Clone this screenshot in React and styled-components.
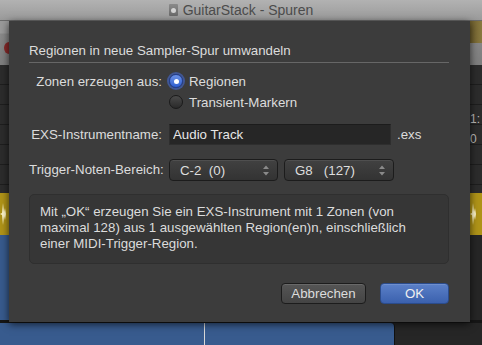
import React, { useState } from 'react';
import styled, { createGlobalStyle } from 'styled-components';

const colors = {
  panel: '#3c3c3c',
  text: '#dcdcdc',
  field: '#262626',
  box: '#363636',
  yellow: '#b09418',
  blue: '#385b8e',
  dark: '#262626',
};

const GlobalStyle = createGlobalStyle`
  html, body {
    margin: 0;
    padding: 0;
    background: ${colors.dark};
    font-family: 'Liberation Sans', Arial, sans-serif;
  }
`;

const Screen = styled.div`
  position: relative;
  width: 482px;
  height: 345px;
  overflow: hidden;
  display: flex;
  flex-direction: column;
`;

// Window title bar
const TitleBar = styled.div`
  height: 21px;
  background: linear-gradient(#b2b2b2, #9a9a9a);
  display: flex;
  align-items: center;
  justify-content: center;
  gap: 5px;
  font-size: 14px;
  color: #4c4c4c;
  border-bottom: 1px solid #6a6a6a;
  box-sizing: border-box;
`;

const DocIcon = styled.span`
  display: inline-block;
  width: 9px;
  height: 12px;
  background: linear-gradient(#8a8a8a, #6a6a6a);
  border-radius: 1px;
  position: relative;
  margin-top: -1px;
  &::after {
    content: '';
    position: absolute;
    left: 2px;
    top: 4px;
    width: 5px;
    height: 5px;
    border-radius: 50%;
    background: #d4d4d4;
  }
`;

// Track area behind the sheet
const Toolbar = styled.div`
  height: 44px;
  display: flex;
  background: linear-gradient(#9a9a9a 0, #9a9a9a 12px, #8a8a8a 13px, #7e7e7e);
  justify-content: space-between;
`;

const RedDot = styled.span`
  width: 10px;
  height: 12px;
  margin-top: 21px;
  margin-left: 4px;
  border-radius: 50%;
  background: #8a2a2a;
`;

const GoldCorner = styled.span`
  width: 14px;
  height: 22px;
  background: linear-gradient(90deg, #6a5a2a, #8a7a40);
`;

const Rows = styled.div`
  height: 128px;
  background: repeating-linear-gradient(#2c2c2c 0, #2c2c2c 19px, #1e1e1e 19px, #1e1e1e 20px);
  display: flex;
  justify-content: flex-end;
`;

const Ruler = styled.div`
  width: 12px;
  padding-top: 47px;
  display: flex;
  flex-direction: column;
  gap: 6px;
  font-size: 12px;
  color: #bbb;
  padding-left: 3px;
`;

const Track = styled.div`
  height: ${(p) => p.$h}px;
  display: flex;
  justify-content: space-between;
  align-items: center;
  background: ${(p) => p.$bg};
  border-bottom: ${(p) => (p.$line ? '3px solid #161616' : 'none')};
  box-sizing: border-box;
`;

const Wave = styled.svg`
  width: 12px;
  height: 30px;
`;

const Region = styled.div`
  width: ${(p) => p.$w}px;
  align-self: stretch;
  background: ${colors.blue};
  border-top-right-radius: 4px;
  border-right: 1px solid #111;
  background-image: linear-gradient(90deg, transparent 204px, #d8d8d8 204px, #d8d8d8 205px, transparent 205px);
`;

// Sheet
const Sheet = styled.div`
  position: absolute;
  left: 9px;
  top: 21px;
  width: 461px;
  height: 301px;
  box-sizing: border-box;
  background: ${colors.panel};
  box-shadow: 0 2px 8px rgba(0, 0, 0, 0.7);
  padding: 22px 21px 0 20px;
  color: ${colors.text};
  font-size: 13.3px;
`;

const Heading = styled.div`
  line-height: 16px;
  padding-bottom: 3px;
  border-bottom: 1px solid #676767;
`;

const Form = styled.div`
  display: grid;
  grid-template-columns: 133px auto;
  column-gap: 7px;
  row-gap: 14px;
  margin-top: 10px;
  align-items: center;
`;

const Label = styled.div`
  text-align: right;
  align-self: ${(p) => (p.$top ? 'start' : 'center')};
  padding-top: ${(p) => (p.$top ? '1px' : '0')};
  line-height: 16px;
  white-space: nowrap;
`;

const RadioGroup = styled.div`
  display: flex;
  flex-direction: column;
  gap: 5px;
`;

const RadioRow = styled.label`
  display: flex;
  align-items: center;
  gap: 6px;
  height: 16px;
  cursor: pointer;
`;

const RadioDot = styled.span`
  width: 14px;
  height: 14px;
  border-radius: 50%;
  box-sizing: border-box;
  display: flex;
  align-items: center;
  justify-content: center;
  background: ${(p) =>
    p.$on ? 'linear-gradient(#6d93e6, #2f5fd0)' : 'linear-gradient(#4a4a4a, #2a2a2a)'};
  border: 1px solid ${(p) => (p.$on ? '#1f3f9a' : '#1a1a1a')};
  box-shadow: ${(p) => (p.$on ? '0 0 0 2px rgba(70, 110, 220, 0.55)' : 'none')};
  &::after {
    content: '';
    width: 5px;
    height: 5px;
    border-radius: 50%;
    background: #fff;
    display: ${(p) => (p.$on ? 'block' : 'none')};
  }
`;

const FieldRow = styled.div`
  display: flex;
  align-items: center;
  gap: 6px;
`;

const TextField = styled.input`
  width: 222px;
  height: 21px;
  box-sizing: border-box;
  background: ${colors.field};
  border: 1px solid #2e2e2e;
  border-top-color: #1c1c1c;
  color: #e6e6e6;
  font-family: inherit;
  font-size: 13.3px;
  padding: 0 3px;
  outline: none;
`;

const SelectBox = styled.div`
  width: ${(p) => p.$w}px;
  height: 22px;
  box-sizing: border-box;
  border: 1px solid #1c1c1c;
  border-radius: 4px;
  background: linear-gradient(#414141, #333);
  box-shadow: inset 0 1px 0 rgba(255, 255, 255, 0.08);
  display: flex;
  align-items: center;
  justify-content: space-between;
  padding: 0 8px 0 10px;
  color: #dedede;
  white-space: pre;
`;

const Steppers = styled.svg`
  width: 6px;
  height: 11px;
`;

const InfoBox = styled.div`
  margin-top: 13px;
  height: 70px;
  box-sizing: border-box;
  background: ${colors.box};
  border: 1px solid #2f2f2f;
  border-radius: 5px;
  padding: 9px 28px 0 10px;
  line-height: 16px;
`;

const Buttons = styled.div`
  display: flex;
  justify-content: flex-end;
  gap: 14px;
  margin-top: 19px;
`;

const Button = styled.button`
  height: 21px;
  width: ${(p) => p.$w}px;
  box-sizing: border-box;
  border-radius: 4px;
  font-family: inherit;
  font-size: 13.3px;
  padding: 0;
  color: ${(p) => (p.$primary ? '#f0f0f0' : '#dcdcdc')};
  border: 1px solid ${(p) => (p.$primary ? '#2b4c8c' : '#1c1c1c')};
  background: ${(p) =>
    p.$primary ? 'linear-gradient(#5b80c8, #3b61ae)' : 'linear-gradient(#555, #444)'};
  box-shadow: inset 0 1px 0 rgba(255, 255, 255, 0.12);
  cursor: pointer;
`;

function Stepper() {
  return (
    <Steppers viewBox="0 0 6 11">
      <path d="M0 4 L3 0.5 L6 4 Z" fill="#8a8a8a" />
      <path d="M0 7 L3 10.5 L6 7 Z" fill="#8a8a8a" />
    </Steppers>
  );
}

function Waveform() {
  return (
    <Wave viewBox="0 0 12 30">
      <path
        d="M0 15 L2 14 L3 4 L4 13 L5 9 L6 15 L5 21 L4 17 L3 26 L2 16 Z"
        fill="#fff6c8"
      />
    </Wave>
  );
}

export default function App() {
  const [source, setSource] = useState('regions');
  const [name, setName] = useState('Audio Track');

  return (
    <Screen>
      <GlobalStyle />
      <TitleBar>
        <DocIcon />
        GuitarStack - Spuren
      </TitleBar>
      <Toolbar>
        <RedDot />
        <GoldCorner />
      </Toolbar>
      <Rows>
        <Ruler>
          <span>1:</span>
          <span>0</span>
        </Ruler>
      </Rows>
      <Track $h={42} $bg={colors.yellow}>
        <Waveform />
        <Waveform />
      </Track>
      <Track $h={88} $bg={colors.dark} $line>
        <Region $w={60} />
      </Track>
      <Track $h={22} $bg={colors.dark}>
        <Region $w={394} />
      </Track>

      <Sheet>
        <Heading>Regionen in neue Sampler-Spur umwandeln</Heading>
        <Form>
          <Label $top>Zonen erzeugen aus:</Label>
          <RadioGroup>
            <RadioRow onClick={() => setSource('regions')}>
              <RadioDot $on={source === 'regions'} />
              Regionen
            </RadioRow>
            <RadioRow onClick={() => setSource('markers')}>
              <RadioDot $on={source === 'markers'} />
              Transient-Markern
            </RadioRow>
          </RadioGroup>

          <Label>EXS-Instrumentname:</Label>
          <FieldRow>
            <TextField value={name} onChange={(e) => setName(e.target.value)} />
            .exs
          </FieldRow>

          <Label>Trigger-Noten-Bereich:</Label>
          <FieldRow>
            <SelectBox $w={109}>
              {'C-2  (0)'}
              <Stepper />
            </SelectBox>
            <SelectBox $w={110}>
              {'G8   (127)'}
              <Stepper />
            </SelectBox>
          </FieldRow>
        </Form>

        <InfoBox>
          Mit „OK“ erzeugen Sie ein EXS-Instrument mit 1 Zonen (von maximal 128)
          aus 1 ausgewählten Region(en)n, einschließlich einer MIDI-Trigger-Region.
        </InfoBox>

        <Buttons>
          <Button $w={85}>Abbrechen</Button>
          <Button $w={69} $primary>OK</Button>
        </Buttons>
      </Sheet>
    </Screen>
  );
}
